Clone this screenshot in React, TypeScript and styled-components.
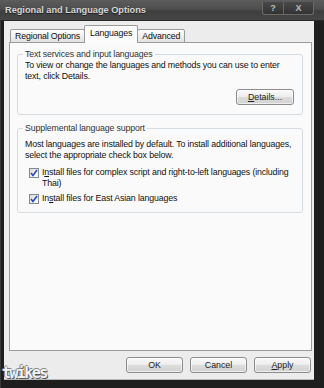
import { createGlobalStyle } from 'styled-components'
import styled from 'styled-components'

const GlobalStyle = createGlobalStyle`
  html, body {
    margin: 0;
    padding: 0;
    background: #1c1c1c;
  }
  * {
    box-sizing: border-box;
  }
`

const FONT = `'Liberation Sans', Arial, sans-serif`

const Window = styled.div`
  position: relative;
  width: 324px;
  height: 388px;
  display: flex;
  flex-direction: column;
  background: #1e1e1e;
  font-family: ${FONT};
  overflow: hidden;
`

const TitleBar = styled.div`
  height: 21px;
  flex: none;
  display: flex;
  align-items: flex-start;
  justify-content: space-between;
  padding: 0 10px 0 5px;
  background: linear-gradient(#5c5c5c 0%, #4e4e4e 45%, #3e3e3e 55%, #464646 100%);
  border-bottom: 1px solid #2a2a2a;
`

const Title = styled.div`
  margin-top: 5px;
  font-size: 9.2px;
  font-weight: bold;
  color: #d6d6d6;
  text-shadow: 0 1px 0 #222;
`

const CaptionButtons = styled.div`
  display: flex;
  margin-top: 2px;
  border: 1px solid #6a6a6a;
  border-top: none;
  border-radius: 0 0 3px 3px;
  background: linear-gradient(#484848, #333);
  overflow: hidden;
`

const CaptionButton = styled.div<{ $w: number }>`
  width: ${(p) => p.$w}px;
  height: 12px;
  display: flex;
  align-items: center;
  justify-content: center;
  font-size: 9px;
  font-weight: bold;
  color: #bdbdbd;
  & + & {
    border-left: 1px solid #666;
  }
`

const Frame = styled.div`
  flex: 1;
  display: flex;
  padding: 0 10px 8px 3px;
  background: #1e1e1e;
  border-left: 1px solid #3a3a3a;
`

const Client = styled.div`
  flex: 1;
  display: flex;
  flex-direction: column;
  padding: 5px 2px 6px 5px;
  background: #ececec;
  border-bottom: 1px solid #b8b8b8;
`

const TabStrip = styled.div`
  display: flex;
  align-items: flex-end;
  height: 17px;
  padding-left: 1px;
  position: relative;
  z-index: 1;
  margin-bottom: -1px;
`

const Tab = styled.div<{ $active?: boolean }>`
  height: ${(p) => (p.$active ? 18 : 14)}px;
  padding: ${(p) => (p.$active ? '2px 5px 0' : '1px 4px 0')};
  margin: ${(p) => (p.$active ? '0 -1px' : '0')};
  font-size: 8.8px;
  letter-spacing: -0.15px;
  line-height: 11px;
  white-space: nowrap;
  color: #111;
  border: 1px solid #9a9a9a;
  border-bottom: ${(p) => (p.$active ? 'none' : '1px solid #9a9a9a')};
  border-radius: 2px 2px 0 0;
  background: ${(p) => (p.$active ? '#fbfbfb' : 'linear-gradient(#fdfdfd, #e2e2e2)')};
  position: relative;
  z-index: ${(p) => (p.$active ? 2 : 1)};
`

const TabPanel = styled.div`
  flex: 1;
  display: flex;
  flex-direction: column;
  padding: 11px 8px 0 7px;
  background: #fafafa;
  border: 1px solid #9c9c9c;
`

const GroupBox = styled.div<{ $gap?: number }>`
  display: flex;
  flex-direction: column;
  margin-top: ${(p) => p.$gap ?? 0}px;
  padding: 0 7px ${(p) => (p.$gap ? 8 : 9)}px;
  border: 1px solid #d4dce2;
  border-radius: 3px;
`

const Legend = styled.div`
  align-self: flex-start;
  margin: -6px 0 0 -2px;
  padding: 0 2px;
  font-size: 8.8px;
  letter-spacing: -0.15px;
  line-height: 11px;
  white-space: nowrap;
  color: #333;
  background: #fafafa;
`

const Text = styled.div<{ $mt?: number }>`
  margin-top: ${(p) => p.$mt ?? 0}px;
  font-size: 8.8px;
  letter-spacing: -0.15px;
  line-height: 11px;
  white-space: nowrap;
  color: #111;
`

const CheckRow = styled.label<{ $mt: number }>`
  display: flex;
  align-items: flex-start;
  gap: 3px;
  margin: ${(p) => p.$mt}px 0 0 4px;
  font-size: 8.8px;
  letter-spacing: -0.15px;
  line-height: 11px;
  white-space: nowrap;
  color: #111;
`

const Box = styled.span`
  flex: none;
  width: 10px;
  height: 10px;
  margin-top: 1px;
  display: flex;
  align-items: center;
  justify-content: center;
  border: 1px solid #7f8b98;
  background: linear-gradient(135deg, #dcdcd6, #ffffff);
`

const Button = styled.div<{ $w: number }>`
  width: ${(p) => p.$w}px;
  height: 16px;
  display: flex;
  align-items: center;
  justify-content: center;
  font-size: 8.8px;
  color: #222;
  border: 1px solid #8c8c8c;
  border-radius: 3px;
  background: linear-gradient(#fafafa 0%, #ececec 50%, #dcdcdc 51%, #d2d2d2 100%);
  box-shadow: inset 0 0 0 1px rgba(255, 255, 255, 0.6);
`

const DetailsRow = styled.div`
  display: flex;
  justify-content: flex-end;
  margin: 7px 1px 0 0;
`

const ButtonRow = styled.div`
  display: flex;
  justify-content: flex-end;
  gap: 7px;
  margin: 6px 1px 0 0;
`

const Watermark = styled.div`
  position: absolute;
  left: 2px;
  top: 364px;
  font-family: 'DejaVu Sans Mono', monospace;
  font-size: 15px;
  font-weight: bold;
  letter-spacing: -1.6px;
  color: #f4f4f4;
  text-shadow: 1px 1px 0 #555, -1px 0 0 #777, 0 -1px 0 #888;
`

const Check = () => (
  <svg width="8" height="8" viewBox="0 0 8 8">
    <path d="M1 4 L3 6.5 L7 1" fill="none" stroke="#2a48b8" strokeWidth="1.6" />
  </svg>
)

const CheckBox = ({ children, mt }: { children: React.ReactNode; mt: number }) => (
  <CheckRow $mt={mt}>
    <Box>
      <Check />
    </Box>
    <span>{children}</span>
  </CheckRow>
)

export default function App() {
  return (
    <>
      <GlobalStyle />
      <Window>
        <TitleBar>
          <Title>Regional and Language Options</Title>
          <CaptionButtons>
            <CaptionButton $w={20}>?</CaptionButton>
            <CaptionButton $w={30}>X</CaptionButton>
          </CaptionButtons>
        </TitleBar>
        <Frame>
          <Client>
            <TabStrip>
              <Tab>Regional Options</Tab>
              <Tab $active>Languages</Tab>
              <Tab>Advanced</Tab>
            </TabStrip>
            <TabPanel>
              <GroupBox>
                <Legend>Text services and input languages</Legend>
                <Text>
                  To view or change the languages and methods you can use to enter
                  <br />
                  text, click Details.
                </Text>
                <DetailsRow>
                  <Button $w={58}>
                    <span>
                      <u>D</u>etails...
                    </span>
                  </Button>
                </DetailsRow>
              </GroupBox>
              <GroupBox $gap={13}>
                <Legend>Supplemental language support</Legend>
                <Text $mt={5}>
                  Most languages are installed by default. To install additional languages,
                  <br />
                  select the appropriate check box below.
                </Text>
                <CheckBox mt={6}>
                  I<u>n</u>stall files for complex script and right-to-left languages (including
                  <br />
                  Thai)
                </CheckBox>
                <CheckBox mt={4}>
                  In<u>s</u>tall files for East Asian languages
                </CheckBox>
              </GroupBox>
            </TabPanel>
            <ButtonRow>
              <Button $w={57}>OK</Button>
              <Button $w={57}>Cancel</Button>
              <Button $w={57}>
                <span>
                  <u>A</u>pply
                </span>
              </Button>
            </ButtonRow>
          </Client>
        </Frame>
        <Watermark>twikes</Watermark>
      </Window>
    </>
  )
}
